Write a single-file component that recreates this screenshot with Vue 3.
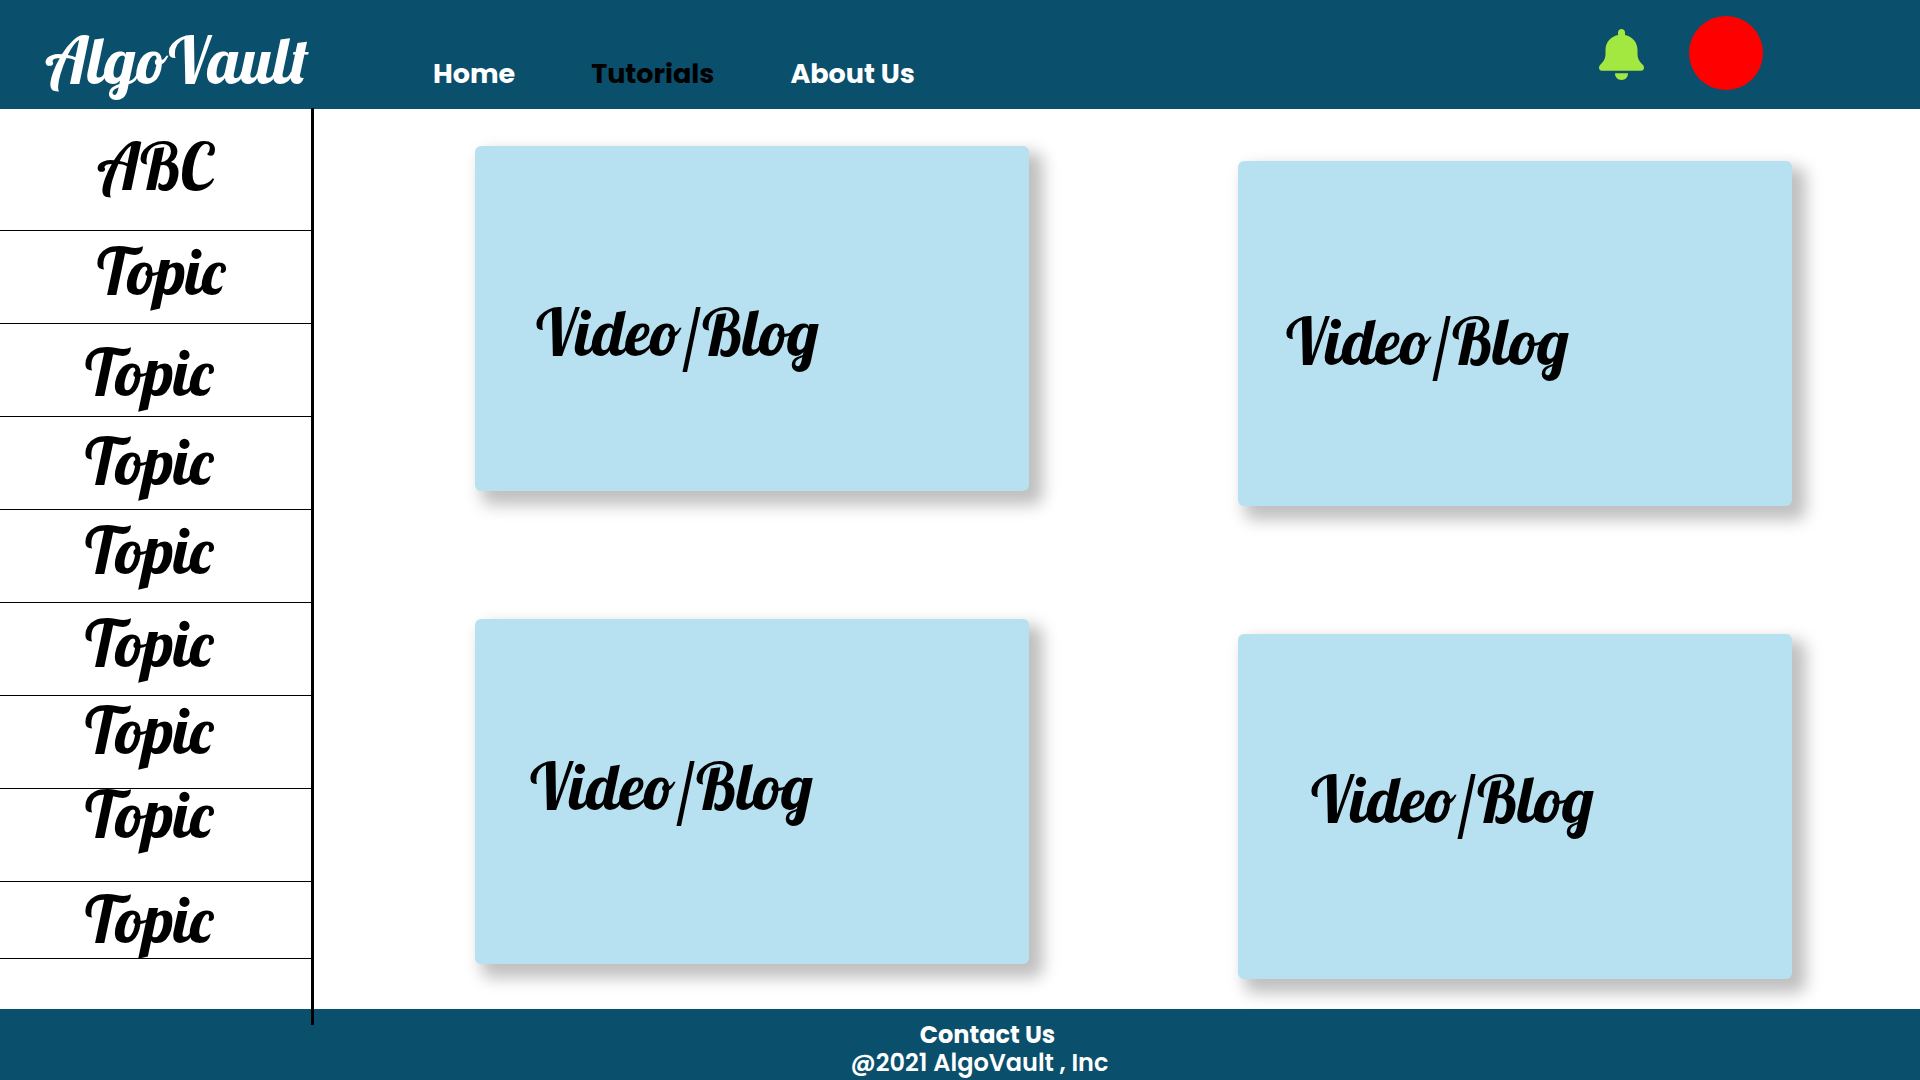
<script setup>
const links = [
  { label: 'Home', active: false },
  { label: 'Tutorials', active: true },
  { label: 'About Us', active: false },
]

const topics = [
  { label: 'ABC', classes: 'tall drop-33 inset' },
  { label: 'Topic', classes: 'drop-16 inset' },
  { label: 'Topic', classes: 'drop-24' },
  { label: 'Topic', classes: 'drop-20' },
  { label: 'Topic', classes: 'drop-16' },
  { label: 'Topic', classes: 'drop-16' },
  { label: 'Topic', classes: 'drop-10' },
  { label: 'Topic', classes: 'drop-1' },
  { label: 'Topic', classes: 'short drop-13' },
]

const cards = ['first', 'second', 'third', 'fourth']
</script>

<template>
  <div class="page">
    <header class="header">
      <a class="logo" href="#">AlgoVault</a>
      <nav class="nav">
        <a
          v-for="link in links"
          :key="link.label"
          href="#"
          class="nav-link"
          :class="{ active: link.active }"
        >{{ link.label }}</a>
      </nav>
      <div class="actions">
        <button class="bell" type="button" aria-label="Notifications">
          <svg viewBox="0 0 45 51" width="45" height="51" aria-hidden="true">
            <path
              d="M22.500 0C24.500 0 26 1.500 26 3.500V6C33.500 7.500 38.500 13.500 38.500 21V24C38.500 29.500 40 32 43.500 35.500C44.500 36.500 45 37.500 45 38.800C45 40.500 43.800 41.800 42 41.800H3C1.200 41.800 0 40.500 0 38.800C0 37.500 .500 36.500 1.500 35.500C5 32 6.500 29.500 6.500 24V21C6.500 13.500 11.500 7.500 19 6V3.500C19 1.500 20.500 0 22.500 0Z"
            />
            <path d="M16 44.300H29C29 48.300 26.300 51 22.500 51S16 48.300 16 44.300Z" />
          </svg>
        </button>
        <button class="avatar" type="button" aria-label="Account"></button>
      </div>
    </header>

    <div class="body">
      <aside class="sidebar">
        <a
          v-for="(topic, index) in topics"
          :key="index"
          href="#"
          class="topic"
          :class="topic.classes"
        >{{ topic.label }}</a>
      </aside>
      <main class="cards">
        <a v-for="card in cards" :key="card" href="#" class="card" :class="card">Video/Blog</a>
      </main>
    </div>

    <footer class="footer">
      <a class="contact" href="#">Contact Us</a>
      <span class="copyright">@2021 AlgoVault , Inc</span>
    </footer>
  </div>
</template>

<style>
body {
  margin: 0;
  background: #ffffff;
}
</style>

<style scoped>
.page {
  display: flex;
  flex-direction: column;
  min-height: 100vh;
  font-family: Poppins, Inter, sans-serif;
}

a {
  color: inherit;
  text-decoration: none;
}

button {
  padding: 0;
  border: 0;
  background: none;
  cursor: pointer;
}

.header {
  display: flex;
  align-items: flex-start;
  box-sizing: border-box;
  height: 109px;
  padding: 0 157px 0 45px;
  background: #0a4f6b;
  color: #ffffff;
}

.logo,
.topic,
.card {
  font-family: Lobster, "Liberation Serif", serif;
  font-size: 64px;
  font-weight: 400;
  line-height: 48px;
}

.logo {
  width: 388px;
  padding-top: 36px;
}

.nav {
  display: flex;
  gap: 76px;
  padding-top: 57px;
  font-size: 27px;
  font-weight: 700;
  line-height: 34px;
}

.nav-link.active {
  color: #000000;
}

.actions {
  display: flex;
  align-items: center;
  gap: 45px;
  margin-left: auto;
  padding-top: 16px;
}

.bell {
  padding-top: 3px;
}

.bell svg {
  display: block;
  fill: #a3e741;
}

.avatar {
  width: 74px;
  height: 74px;
  border-radius: 50%;
  background: #ff0000;
}

.body {
  display: flex;
  flex: 1;
}

.sidebar {
  position: relative;
  flex: none;
  width: 311px;
  padding-right: 3px;
}

/* Divider that overlaps the header and footer edges */
.sidebar::after {
  content: "";
  position: absolute;
  top: -1px;
  right: 0;
  bottom: -16px;
  width: 3px;
  background: #000000;
}

.topic {
  display: block;
  box-sizing: border-box;
  height: 93px;
  padding-left: 85px;
  border-bottom: 1px solid #000000;
  color: #000000;
}

.topic.tall { height: 122px; }
.topic.short { height: 77px; }
.topic.inset { padding-left: 97px; }
.drop-1 { padding-top: 1px; }
.drop-10 { padding-top: 10px; }
.drop-13 { padding-top: 13px; }
.drop-16 { padding-top: 16px; }
.drop-20 { padding-top: 20px; }
.drop-24 { padding-top: 24px; }
.drop-33 { padding-top: 33px; }

.cards {
  display: grid;
  flex: 1;
  grid-template-columns: 1fr 1fr;
  align-content: start;
  gap: 128px 209px;
  padding: 37px 128px 45px 161px;
}

.card {
  box-sizing: border-box;
  height: 345px;
  border-radius: 6px;
  background: #b7e1f0;
  box-shadow: 10px 10px 16px 4px rgba(0, 0, 0, 0.25);
  color: #000000;
}

.card:nth-child(even) {
  position: relative;
  top: 15px;
}

.first { padding: 162px 0 0 61px; }
.second { padding: 156px 0 0 48px; }
.third { padding: 143px 0 0 55px; }
.fourth { padding: 141px 0 0 73px; }

.footer {
  display: flex;
  flex-direction: column;
  align-items: center;
  padding: 12px 0 3px 39px;
  background: #0a4f6b;
  color: #ffffff;
  font-size: 24px;
  line-height: 28px;
}

.contact {
  padding-left: 16px;
  font-weight: 700;
}

.copyright {
  font-weight: 600;
}
</style>
